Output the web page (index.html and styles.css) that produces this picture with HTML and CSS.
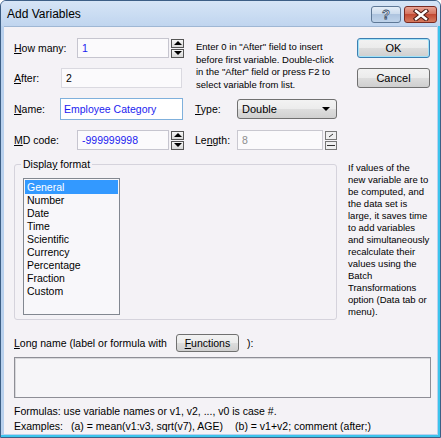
FILE: index.html
```html
<!DOCTYPE html>
<html lang="en">

<head>
    <meta charset="UTF-8">
    <title>Add Variables</title>
    <link rel="stylesheet" href="styles.css">
</head>

<body>

    <div class="window">
        <div class="titlebar">
            <span class="title">Add Variables</span>
            <div class="caption-btns">
                <button class="cap help">?</button>
                <button class="cap close">
                    <svg width="16" height="12" viewBox="0 0 16 12">
                        <path d="M3 2 L13 10 M13 2 L3 10" stroke="#4a1a14" stroke-width="4.5" stroke-linecap="square" />
                        <path d="M3 2 L13 10 M13 2 L3 10" stroke="#fff" stroke-width="2.4" stroke-linecap="square" />
                    </svg>
                </button>
            </div>
        </div>

        <div class="client">
            <div class="top">
                <div class="form">
                    <div class="upper">
                        <div class="upper-left">
                            <div class="row">
                                <label class="lbl w-how"><u>H</u>ow many:</label>
                                <div class="field num blue">1</div>
                                <div class="spin">
                                    <span class="spin-btn"><i class="arrow-up"></i></span>
                                    <span class="spin-btn"><i class="arrow-down"></i></span>
                                </div>
                            </div>
                            <div class="row gap10">
                                <label class="lbl w-after"><u>A</u>fter:</label>
                                <div class="field after">2</div>
                            </div>
                        </div>
                        <p class="info">Enter 0 in "After" field to insert<br>before first variable. Double-click<br>in the "After" field or press F2 to<br>select variable from list.</p>
                    </div>

                    <div class="row gap11">
                        <label class="lbl w-name"><u>N</u>ame:</label>
                        <div class="field name blue">Employee Category</div>
                        <label class="lbl w-type"><u>T</u>ype:</label>
                        <div class="select">
                            <span>Double</span>
                            <i class="arrow-down"></i>
                        </div>
                    </div>

                    <div class="row gap11">
                        <label class="lbl w-how"><u>M</u>D code:</label>
                        <div class="field num blue">-999999998</div>
                        <div class="spin">
                            <span class="spin-btn"><i class="arrow-up"></i></span>
                            <span class="spin-btn"><i class="arrow-down"></i></span>
                        </div>
                        <label class="lbl w-len">Le<u>n</u>gth:</label>
                        <div class="field length">8</div>
                        <div class="spin disabled">
                            <span class="spin-btn">
                                <svg width="6" height="5" viewBox="0 0 6 5"><path d="M1 4 L5 1" stroke="#333" stroke-width="1" /></svg>
                            </span>
                            <span class="spin-btn">
                                <svg width="8" height="3" viewBox="0 0 8 3"><path d="M0 1.5 H8" stroke="#333" stroke-width="1" /></svg>
                            </span>
                        </div>
                    </div>
                </div>

                <div class="buttons">
                    <button class="btn default">OK</button>
                    <button class="btn">Cancel</button>
                </div>
            </div>

            <div class="middle">
                <fieldset class="group">
                    <legend>Displa<u>y</u> format</legend>
                    <ul class="listbox">
                        <li class="selected">General</li>
                        <li>Number</li>
                        <li>Date</li>
                        <li>Time</li>
                        <li>Scientific</li>
                        <li>Currency</li>
                        <li>Percentage</li>
                        <li>Fraction</li>
                        <li>Custom</li>
                    </ul>
                </fieldset>
                <p class="note">If values of the<br>new variable are to<br>be computed, and<br>the data set is<br>large, it saves time<br>to add variables<br>and simultaneously<br>recalculate their<br>values using the<br>Batch<br>Transformations<br>option (Data tab or<br>menu).</p>
            </div>

            <div class="longname">
                <span><u>L</u>ong name (label or formula with</span>
                <button class="btn small"><u>F</u>unctions</button>
                <span class="close-paren">):</span>
            </div>
            <div class="textarea"></div>

            <div class="formulas">
                <div>Formulas: use variable names or v1, v2, ..., v0 is case #.</div>
                <div>Examples:<span class="ex-a">(a) = mean(v1:v3, sqrt(v7), AGE)</span><span class="ex-b">(b) = v1+v2; comment (after;)</span></div>
            </div>
        </div>
    </div>

</body>

</html>
```

FILE: styles.css
```css
body {
    margin: 0;
    font-family: "Liberation Sans", Arial, sans-serif;
    font-size: 10.5px;
    color: #000;
    background-color: #fff;
}

.window {
    width: 441px;
    height: 438px;
    box-sizing: border-box;
    border: 1px solid #3d5f86;
    border-radius: 6px 6px 0 0;
    background: #b9d1ee;
    padding: 0 3px 3px;
    display: flex;
    flex-direction: column;
    box-shadow: inset -2px -2px 0 #3cc4ec;
}

/* title bar */
.titlebar {
    height: 25px;
    flex: none;
    margin: 0 -3px;
    padding: 0 3px 0 6px;
    display: flex;
    justify-content: space-between;
    background: linear-gradient(#d6e5f6, #c0d5ef);
    border-radius: 5px 5px 0 0;
}

.title {
    font-size: 12px;
    line-height: 26px;
}

.caption-btns {
    display: flex;
    gap: 3px;
    margin-top: 5px;
}

.cap {
    height: 17px;
    border: 1px solid #5e7896;
    border-radius: 3px;
    padding: 0;
    display: flex;
    align-items: center;
    justify-content: center;
}

.help {
    width: 30px;
    background: linear-gradient(#e4edf7 0%, #c9d9ec 50%, #aec4df 50%, #bfd3ea 100%);
    color: #fff;
    font: bold 13px "Liberation Sans", Arial, sans-serif;
    -webkit-text-stroke: 0.8px #3a4f68;
}

.close {
    width: 33px;
    border-color: #7a2b22;
    background: linear-gradient(#e8a494 0%, #d4705c 50%, #c34a34 50%, #d57a5e 100%);
}

/* client area */
.client {
    flex: 1;
    background: #f4f2f6;
    padding: 11px 0 0 10px;
    border-top: 1px solid #9fb7d4;
}

.top {
    display: flex;
}

.form {
    width: 323px;
}

.upper {
    display: flex;
    height: 50px;
}

.upper-left {
    width: 170px;
}

.row {
    display: flex;
    align-items: center;
    height: 20px;
}

.gap10 {
    margin-top: 10px;
}

.gap11 {
    margin-top: 11px;
}

.lbl {
    flex: none;
}

.w-how {
    width: 63px;
}

.w-after {
    width: 47px;
}

.w-name {
    width: 46px;
}

.w-type {
    width: 42px;
    margin-left: 12px;
}

.w-len {
    width: 42px;
    margin-left: 11px;
}

.field {
    box-sizing: border-box;
    height: 20px;
    line-height: 18px;
    border: 1px solid #c6c5cf;
    background: #fbfafc;
    padding-left: 4px;
    font-size: 10.5px;
}

.blue {
    color: #1c1cf0;
}

.num {
    width: 92px;
}

.after {
    width: 121px;
    border-color: #dad9e0;
}

.name {
    width: 123px;
    height: 22px;
    line-height: 20px;
    padding-left: 3px;
    border-color: #7fb0dc;
    background: #fff;
}

.length {
    width: 86px;
    color: #8d8d8d;
    border-color: #c9c8d0;
}

.info {
    margin: 3px 0 0 12px;
    width: 141px;
    font-size: 9.5px;
    line-height: 12.5px;
}

/* spinners */
.spin {
    display: flex;
    flex-direction: column;
    gap: 1px;
    width: 13px;
    height: 19px;
    margin-left: 2px;
    flex: none;
}

.spin-btn {
    flex: 1;
    border: 1px solid #555;
    background: linear-gradient(#f6f6f6, #d8d8d8);
    display: flex;
    align-items: center;
    justify-content: center;
}

.spin.disabled {
    width: 12px;
}

.spin.disabled .spin-btn {
    border-color: #777;
    background: #efeff0;
}

.arrow-up,
.arrow-down {
    width: 0;
    height: 0;
    border-left: 4px solid transparent;
    border-right: 4px solid transparent;
}

.arrow-up {
    border-bottom: 4px solid #000;
}

.arrow-down {
    border-top: 4px solid #000;
}

.select {
    width: 100px;
    height: 20px;
    box-sizing: border-box;
    border: 1px solid #707070;
    border-radius: 3px;
    background: linear-gradient(#f3f3f3 0%, #ececec 50%, #dedede 50%, #d0d0d0 100%);
    display: flex;
    align-items: center;
    justify-content: space-between;
    padding: 0 6px 0 4px;
    font-size: 11px;
}

/* buttons */
.buttons {
    margin-left: 20px;
    width: 73px;
    display: flex;
    flex-direction: column;
    gap: 10px;
}

.btn {
    height: 20px;
    box-sizing: border-box;
    border: 1px solid #707070;
    border-radius: 3px;
    background: linear-gradient(#f2f2f2 0%, #ebebeb 50%, #dddddd 50%, #cfcfcf 100%);
    font-family: "Liberation Sans", Arial, sans-serif;
    font-size: 11px;
    color: #000;
    padding: 0;
}

.btn.default {
    border-color: #3c7fb1;
    box-shadow: inset 0 0 0 1px #9fe2f8;
}

/* display format */
.middle {
    display: flex;
    margin-top: 8px;
}

.group {
    width: 323px;
    height: 162px;
    box-sizing: border-box;
    margin: 0;
    padding: 7px 0 0 8px;
    border: 1px solid #d5d3dc;
    border-radius: 3px;
}

.group legend {
    padding: 0 2px;
    margin-left: -2px;
    line-height: 13px;
}

.listbox {
    list-style: none;
    margin: 0;
    padding: 1px;
    width: 97px;
    height: 137px;
    box-sizing: border-box;
    border: 1px solid #828790;
    background: #f8f7fa;
}

.listbox li {
    line-height: 13px;
    padding-left: 2px;
}

.listbox .selected {
    background: #3399ff;
    color: #fff;
    line-height: 14px;
}

.note {
    margin: 4px 0 0 11px;
    font-size: 9.5px;
    line-height: 12px;
}

/* long name */
.longname {
    display: flex;
    align-items: center;
    height: 18px;
    margin-top: 14px;
}

.btn.small {
    width: 63px;
    height: 18px;
    margin-left: 9px;
    font-size: 10.5px;
}

.close-paren {
    margin-left: 8px;
}

.textarea {
    width: 417px;
    height: 41px;
    box-sizing: border-box;
    margin-top: 5px;
    border: 1px solid #8e8e96;
    box-shadow: inset 1px 1px 0 #d8d8dc;
    background: #f6f5f8;
}

.formulas {
    margin-top: 6px;
    line-height: 15px;
}

.ex-a {
    margin-left: 8px;
}

.ex-b {
    margin-left: 12px;
}
```
